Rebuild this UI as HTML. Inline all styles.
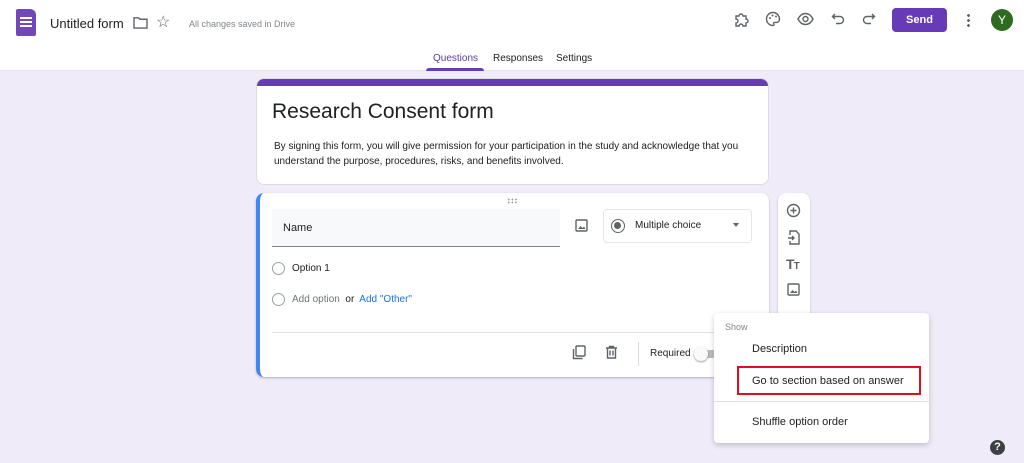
<!DOCTYPE html>
<html><head><style>
*{margin:0;padding:0;box-sizing:border-box}
body{width:1024px;height:463px;background:#f0ebf8;font-family:"Liberation Sans",sans-serif;position:relative;overflow:hidden;color:#202124}
.a{position:absolute}
svg{display:block}
</style></head><body>
<div class="a" style="left:0;top:0;width:1024px;height:71px;background:#fff;border-bottom:1px solid #e4e0ee"></div>
<div class="a" style="left:16px;top:9px;width:20px;height:27px;background:#7248b9;border-radius:2px 6px 2px 2px"></div>
<div class="a" style="left:20px;top:17px;width:12px;height:12px">
<div style="height:2px;background:#fff;margin-bottom:2px"></div><div style="height:2px;background:#fff;margin-bottom:2px"></div><div style="height:2px;background:#fff"></div></div>
<div class="a" style="left:50px;top:16px;font-size:13px;color:#202124">Untitled form</div>
<svg class="a" style="left:133px;top:16px" width="15" height="13" viewBox="0 0 16 14"><path d="M1 2h5l1.5 1.5H15V13H1z" fill="none" stroke="#5f6368" stroke-width="1.5"/></svg>
<div class="a" style="left:156px;top:12px;font-size:16px;color:#5f6368">☆</div>
<div class="a" style="left:189px;top:19px;font-size:9px;color:#80868b">All changes saved in Drive</div>
<svg class="a" style="left:733px;top:12px" width="16" height="16" viewBox="0 0 16 16"><path d="M3 4h3a2 2 0 0 1 4 0h3v3a2 2 0 0 1 0 4v3H10a2 2 0 0 0-4 0H3v-3a2 2 0 0 0 0-4z" fill="none" stroke="#5f6368" stroke-width="1.4"/></svg>
<svg class="a" style="left:765px;top:11px" width="16" height="16" viewBox="0 0 16 16"><path d="M8 1.5a6.5 6.5 0 0 0 0 13c1 0 1.3-.8.8-1.5s-.2-1.6.8-1.6H12a3 3 0 0 0 2.5-3C14.5 4.5 11.6 1.5 8 1.5z" fill="none" stroke="#5f6368" stroke-width="1.4"/><circle cx="5" cy="7" r="1" fill="#5f6368"/><circle cx="7.5" cy="4.5" r="1" fill="#5f6368"/><circle cx="11" cy="5.5" r="1" fill="#5f6368"/></svg>
<svg class="a" style="left:797px;top:12px" width="17" height="14" viewBox="0 0 17 14"><path d="M1 7c2-4 5-5.5 7.5-5.5S14 3 16 7c-2 4-5 5.5-7.5 5.5S3 11 1 7z" fill="none" stroke="#5f6368" stroke-width="1.4"/><circle cx="8.5" cy="7" r="2.5" fill="none" stroke="#5f6368" stroke-width="1.4"/></svg>
<svg class="a" style="left:831px;top:12px" width="14" height="14" viewBox="0 0 14 14"><path d="M4 2L1.5 4.5 4 7M1.5 4.5H9a3.5 3.5 0 0 1 0 7H5" fill="none" stroke="#5f6368" stroke-width="1.4"/></svg>
<svg class="a" style="left:862px;top:12px" width="14" height="14" viewBox="0 0 14 14"><path d="M10 2l2.5 2.5L10 7M12.5 4.5H5a3.5 3.5 0 0 0 0 7h4" fill="none" stroke="#5f6368" stroke-width="1.4"/></svg>
<div class="a" style="left:892px;top:8px;width:55px;height:24px;background:#673ab7;border-radius:4px;color:#fff;font-size:11px;font-weight:bold;text-align:center;line-height:24px">Send</div>
<div class="a" style="left:967px;top:13px;width:3px;height:14px;background:radial-gradient(circle,#5f6368 1.3px,transparent 1.5px) 0 0/3px 5px"></div>
<div class="a" style="left:991px;top:9px;width:22px;height:22px;border-radius:50%;background:#2e6b1f;color:#fff;font-size:12px;text-align:center;line-height:22px">Y</div>
<div class="a" style="left:433px;top:53px;font-size:10px;color:#5a3d9c">Questions</div>
<div class="a" style="left:426px;top:68px;width:58px;height:3px;background:#673ab7;border-radius:3px 3px 0 0"></div>
<div class="a" style="left:493px;top:53px;font-size:10px;color:#202124">Responses</div>
<div class="a" style="left:556px;top:53px;font-size:10px;color:#202124">Settings</div>

<div class="a" style="left:256px;top:78px;width:513px;height:107px;background:#fff;border-radius:8px;overflow:hidden;border:1px solid #dadce0">
<div style="height:7px;background:#673ab7"></div></div>
<div class="a" style="left:272px;top:100px;font-size:21px;color:#202124">Research Consent form</div>
<div class="a" style="left:274px;top:139px;font-size:10px;line-height:15px;color:#202124;width:480px">By signing this form, you will give permission for your participation in the study and acknowledge that you understand the purpose, procedures, risks, and benefits involved.</div>

<div class="a" style="left:256px;top:193px;width:513px;height:184px;background:#fff;border-radius:8px;border-left:4px solid #4285f4;box-shadow:0 1px 2px rgba(0,0,0,.25)"></div>
<div class="a" style="left:507px;top:198px;width:11px;height:6px;background:radial-gradient(circle,#9aa0a6 .8px,transparent 1px) 0 0/3.6px 3px"></div>
<div class="a" style="left:272px;top:209px;width:288px;height:38px;background:#f8f9fa;border-bottom:1px solid #80868b"></div>
<div class="a" style="left:283px;top:222px;font-size:11px">Name</div>
<svg class="a" style="left:575px;top:219px" width="13" height="13" viewBox="0 0 13 13"><rect x="1" y="1" width="11" height="11" rx="1" fill="none" stroke="#5f6368" stroke-width="1.4"/><path d="M3 10l2.5-3 2 2 1.5-1.5L10.5 10z" fill="#5f6368"/></svg>
<div class="a" style="left:603px;top:209px;width:149px;height:34px;border:1px solid #e6e6e6;border-radius:4px"></div>
<div class="a" style="left:611px;top:219px;width:14px;height:14px;border:1.5px solid #5f6368;border-radius:50%"><div style="width:7px;height:7px;background:#5f6368;border-radius:50%;margin:2px"></div></div>
<div class="a" style="left:635px;top:220px;font-size:10px;color:#202124">Multiple choice</div>
<div class="a" style="left:733px;top:223px;border:3px solid transparent;border-top:4px solid #5f6368"></div>
<div class="a" style="left:272px;top:262px;width:13px;height:13px;border:1.3px solid #9aa0a6;border-radius:50%"></div>
<div class="a" style="left:292px;top:263px;font-size:10px;color:#202124">Option 1</div>
<div class="a" style="left:272px;top:293px;width:13px;height:13px;border:1.3px solid #9aa0a6;border-radius:50%"></div>
<div class="a" style="left:292px;top:294px;font-size:10px;color:#70757a">Add option <span style="color:#202124">&nbsp;or&nbsp;</span> <span style="color:#1a73e8">Add "Other"</span></div>
<div class="a" style="left:272px;top:332px;width:497px;height:1px;background:#e0e0e0"></div>
<svg class="a" style="left:572px;top:345px" width="14" height="15" viewBox="0 0 14 15"><rect x="4" y="1" width="9" height="10" rx="1" fill="none" stroke="#5f6368" stroke-width="1.4"/><path d="M1.5 4v9.5h9" fill="none" stroke="#5f6368" stroke-width="1.4"/></svg>
<svg class="a" style="left:605px;top:345px" width="13" height="14" viewBox="0 0 13 14"><path d="M1 3h11M4.5 3V1.5h4V3M2.5 3v10h8V3M5 5.5v5M8 5.5v5" fill="none" stroke="#5f6368" stroke-width="1.4"/></svg>
<div class="a" style="left:638px;top:342px;width:1px;height:24px;background:#dadce0"></div>
<div class="a" style="left:650px;top:348px;font-size:10px;color:#202124">Required</div>
<div class="a" style="left:697px;top:350px;width:22px;height:8px;background:#bdbdbd;border-radius:4px"></div>
<div class="a" style="left:694px;top:347px;width:14px;height:14px;background:#fafafa;border-radius:50%;box-shadow:0 1px 2px rgba(0,0,0,.4)"></div>

<div class="a" style="left:778px;top:193px;width:32px;height:130px;background:#fff;border-radius:8px;box-shadow:0 1px 2px rgba(0,0,0,.2)"></div>
<svg class="a" style="left:786px;top:203px" width="15" height="15" viewBox="0 0 15 15"><circle cx="7.5" cy="7.5" r="6" fill="none" stroke="#5f6368" stroke-width="1.4"/><path d="M7.5 4.5v6M4.5 7.5h6" stroke="#5f6368" stroke-width="1.4"/></svg>
<svg class="a" style="left:787px;top:230px" width="13" height="15" viewBox="0 0 13 15"><path d="M3 5V1h6l3 3v10H3v-3M1 8h6M5 6l2 2-2 2" fill="none" stroke="#5f6368" stroke-width="1.4"/></svg>
<div class="a" style="left:786px;top:256px;font-size:14px;font-weight:bold;color:#5f6368;letter-spacing:-1px">T<span style="font-size:10px">T</span></div>
<svg class="a" style="left:787px;top:283px" width="13" height="13" viewBox="0 0 13 13"><rect x="1" y="1" width="11" height="11" rx="1" fill="none" stroke="#5f6368" stroke-width="1.4"/><path d="M3 10l2.5-3 2 2 1.5-1.5L10.5 10z" fill="#5f6368"/></svg>

<div class="a" style="left:714px;top:313px;width:215px;height:130px;background:#fff;border-radius:4px;box-shadow:0 2px 6px rgba(0,0,0,.2)"></div>
<div class="a" style="left:725px;top:322px;font-size:9px;color:#80868b">Show</div>
<div class="a" style="left:752px;top:343px;font-size:11px;color:#202124">Description</div>
<div class="a" style="left:737px;top:366px;width:184px;height:29px;border:2px solid #e0101a"></div>
<div class="a" style="left:752px;top:375px;font-size:11px;color:#202124">Go to section based on answer</div>
<div class="a" style="left:714px;top:401px;width:215px;height:1px;background:#e0e0e0"></div>
<div class="a" style="left:752px;top:416px;font-size:11px;color:#202124">Shuffle option order</div>

<div class="a" style="left:990px;top:440px;width:15px;height:15px;border-radius:50%;background:#3c4043;color:#fff;font-size:11px;font-weight:bold;text-align:center;line-height:15px">?</div>
</body></html>
